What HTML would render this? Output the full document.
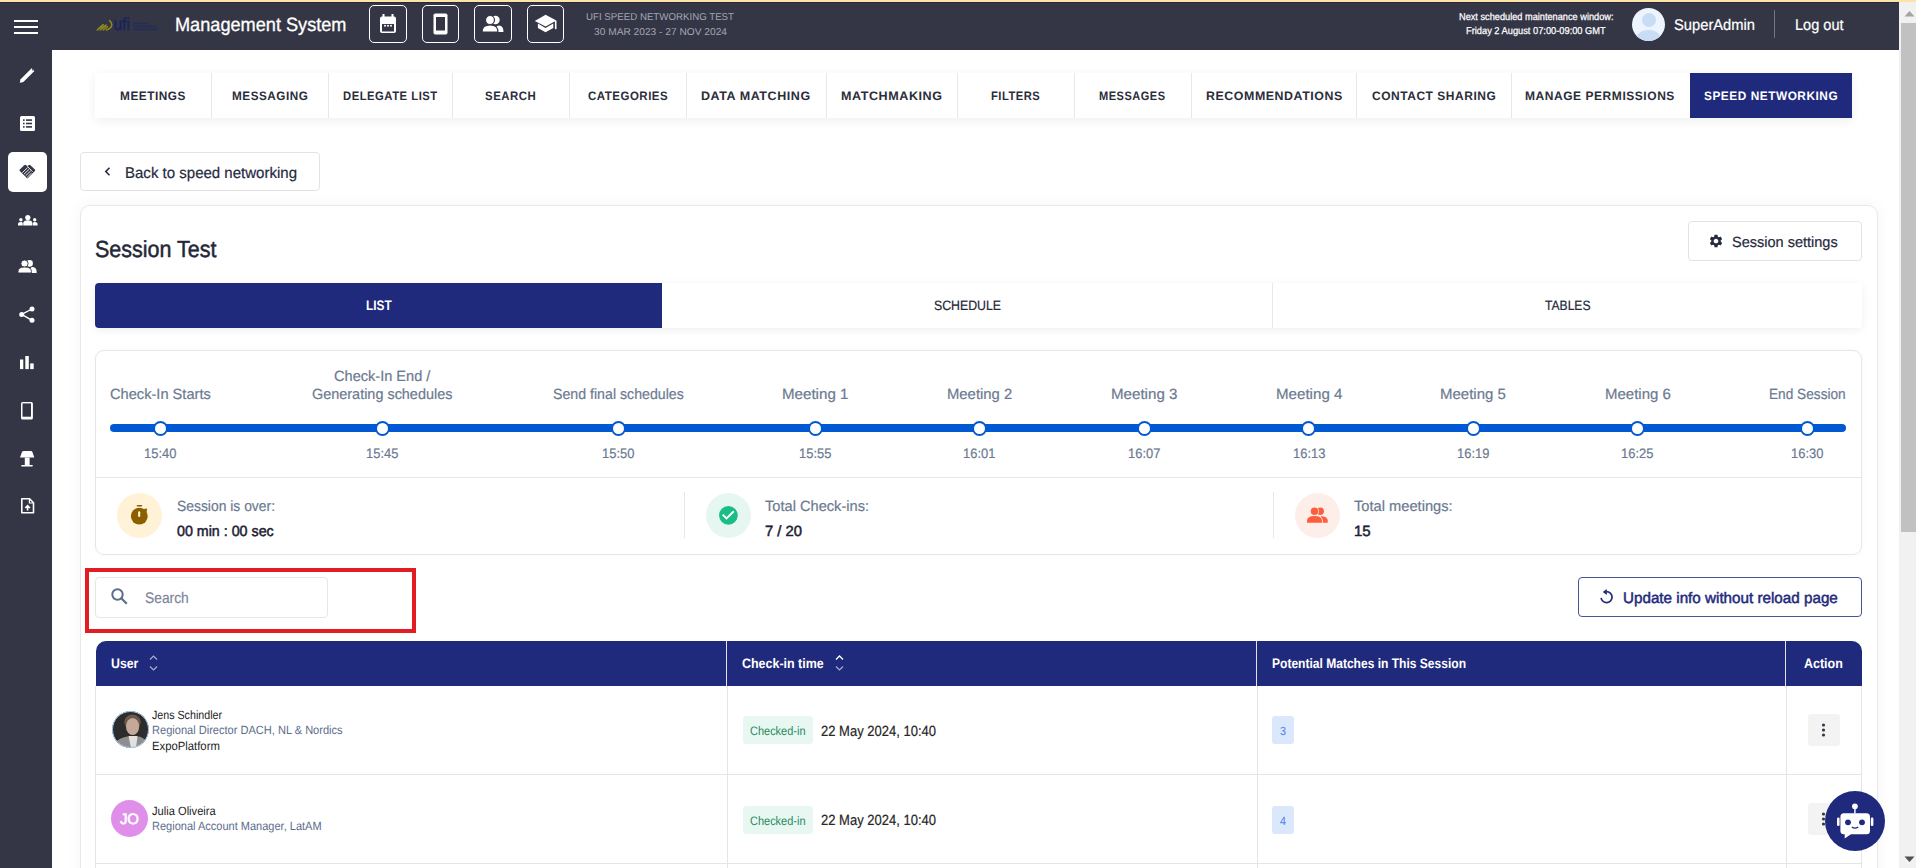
<!DOCTYPE html>
<html><head><meta charset="utf-8">
<style>
*{box-sizing:border-box;margin:0;padding:0}
html,body{width:1916px;height:868px;overflow:hidden;background:#fff;font-family:"Liberation Sans",sans-serif;text-rendering:geometricPrecision}
body{position:relative}
.a{position:absolute}
.t{position:absolute;white-space:nowrap;line-height:1;transform-origin:0 0}
svg{position:absolute;overflow:visible}
.hbox{position:absolute;top:5px;width:38px;height:38px;border:1.6px solid #fff;border-radius:5px}
.div{position:absolute;top:0;width:1px;height:45px;background:#e4e9f0}
.node{position:absolute;top:420.5px;width:15px;height:15px;border-radius:50%;background:#fff;border:2.6px solid #0059d2}
</style></head>
<body>
<!-- frame -->
<div class="a" style="left:0;top:0;width:1916px;height:2px;background:#ffe2a8"></div>
<div class="a" style="left:0;top:2px;width:1899px;height:48px;background:#343646;border-top:1px solid #252a3d"></div>
<div class="a" style="left:0;top:50px;width:52px;height:818px;background:#343646"></div>
<div class="a" style="left:1899px;top:2px;width:17px;height:866px;background:#f1f1f1"></div>
<div class="a" style="left:1901px;top:23px;width:15px;height:509px;background:#c1c1c1"></div>
<svg style="left:1904px;top:10px" width="11" height="7" viewBox="0 0 11 7"><path d="M0.5 6.5 L5.5 1 L10.5 6.5Z" fill="#a3a3a3"/></svg>
<svg style="left:1904px;top:856px" width="11" height="7" viewBox="0 0 11 7"><path d="M0.5 0.5 L5.5 6 L10.5 0.5Z" fill="#505050"/></svg>

<!-- hamburger -->
<div class="a" style="left:14px;top:20px;width:24px;height:2.4px;background:#fff"></div>
<div class="a" style="left:14px;top:26px;width:24px;height:2.4px;background:#fff"></div>
<div class="a" style="left:14px;top:31.6px;width:24px;height:2.4px;background:#fff"></div>

<!-- logo -->
<svg style="left:96px;top:16px" width="64" height="16" viewBox="0 0 64 16">
  <g stroke="#8d8a1c" stroke-width="1.5" fill="none" stroke-linecap="round">
    <path d="M1.2 14 L6.5 9.8"/><path d="M4.2 14 L9.5 9.8"/><path d="M7.2 14 L11.5 10.6"/>
    <path d="M3 12.2 L7.3 8.6"/><path d="M6 12.2 L10 9"/>
    <path d="M10.5 14 Q15.8 12.2 15.8 8.8 Q15.8 6.4 13.6 4.6"/>
  </g>
  <text x="17.4" y="14.1" font-family="Liberation Sans" font-size="17.5" fill="#19245a" stroke="#19245a" stroke-width="0.5" textLength="16.5" lengthAdjust="spacingAndGlyphs">ufi</text>
  <g fill="#1e2a5c" opacity=".75"><rect x="37.3" y="6.6" width="14.6" height="1.6"/><rect x="37.3" y="9.6" width="23.7" height="1.6"/><rect x="37.3" y="12.6" width="24.8" height="1.6"/></g>
</svg>

<!-- header icon boxes -->
<div class="hbox" style="left:369px"></div>
<div class="hbox" style="left:422px;width:37px"></div>
<div class="hbox" style="left:474px"></div>
<div class="hbox" style="left:527px;width:37px"></div>
<!-- calendar -->
<svg style="left:379px;top:14px" width="18" height="20" viewBox="0 0 18 20">
  <rect x="1" y="2.5" width="16" height="16.5" rx="2" fill="#fff"/>
  <rect x="3.5" y="0" width="2" height="4" fill="#fff"/><rect x="12.5" y="0" width="2" height="4" fill="#fff"/>
  <rect x="3" y="10" width="12" height="7.5" fill="#343646"/>
  <circle cx="6" cy="11.8" r="1" fill="#fff"/><circle cx="9" cy="11.8" r="1" fill="#fff"/><circle cx="12" cy="11.8" r="1" fill="#fff"/>
</svg>
<!-- mobile -->
<svg style="left:433px;top:13px" width="15" height="22" viewBox="0 0 15 22">
  <rect x="0.5" y="0.5" width="14" height="21" rx="1.8" fill="#fff"/>
  <rect x="3" y="4" width="9" height="13.5" fill="#343646"/>
</svg>
<!-- users -->
<svg style="left:482px;top:15px" width="22" height="17" viewBox="0 0 22 17">
  <circle cx="13.5" cy="5" r="4.2" fill="#fff"/>
  <path d="M13 17 Q13 10.5 17 10.5 Q21.5 10.5 21.5 17Z" fill="#fff"/>
  <circle cx="8" cy="5" r="4.5" fill="#fff" stroke="#343646" stroke-width="1.2"/>
  <path d="M0 17 Q0 10 8 10 Q16 10 16 17Z" fill="#fff" stroke="#343646" stroke-width="1.2"/>
</svg>
<!-- graduation cap -->
<svg style="left:535px;top:15px" width="22" height="18" viewBox="0 0 22 18">
  <path d="M10.6 -0.3 L21.4 5.6 L10.6 11.6 L-0.2 6Z" fill="#fff"/>
  <path d="M2.9 8.6 L2.9 13 L10.5 17.3 L18.3 13 L18.3 8.6 L10.5 12.9Z" fill="#fff"/>
  <rect x="19.9" y="5.8" width="1.6" height="8.3" fill="#fff"/>
</svg>

<!-- header avatar & divider -->
<div class="a" style="left:1632px;top:7.5px;width:33px;height:33px;border-radius:50%;background:#eef4fd;overflow:hidden">
  <div class="a" style="left:9.5px;top:5.5px;width:14px;height:14px;border-radius:50%;background:#c8dcf6"></div>
  <div class="a" style="left:3px;top:22px;width:27px;height:22px;border-radius:50%;background:#c8dcf6"></div>
</div>
<div class="a" style="left:1774px;top:10px;width:1px;height:28px;background:#737584"></div>

<!-- sidebar icons -->
<div class="a" style="left:8px;top:152px;width:39px;height:40px;background:#fff;border-radius:5px"></div>
<!-- pencil -->
<svg style="left:19px;top:67px" width="17" height="17" viewBox="0 0 17 17">
  <path d="M0.8 15.2 L1.6 12.2 L12.6 1.2 L15.4 4 L4.4 15 L1.2 15.8Z" fill="#fff"/>
  <circle cx="13.6" cy="2.9" r="0.6" fill="#343646"/>
</svg>
<!-- list -->
<svg style="left:20px;top:116px" width="15" height="15" viewBox="0 0 15 15">
  <rect x="0" y="0" width="15" height="15" rx="1.5" fill="#fff"/>
  <g fill="#343646"><rect x="3" y="3.3" width="1.6" height="1.6"/><rect x="3" y="6.7" width="1.6" height="1.6"/><rect x="3" y="10.1" width="1.6" height="1.6"/>
  <rect x="6" y="3.3" width="6" height="1.6"/><rect x="6" y="6.7" width="6" height="1.6"/><rect x="6" y="10.1" width="6" height="1.6"/></g>
</svg>
<!-- handshake -->
<svg style="left:19px;top:164px" width="17" height="15" viewBox="0 0 17 15">
  <path d="M0.8 5.6 L5.2 1.2 Q6.2 0.3 7.2 1.2 L8.3 2.2 L9.4 1.2 Q10.4 0.3 11.4 1.2 L15.9 5.6 Q16.6 6.3 15.9 7 L9 14 Q8.4 14.6 7.8 14 L0.8 7 Q0.1 6.3 0.8 5.6Z" fill="#343646"/>
  <g stroke="#fff" stroke-width="0.9" fill="none">
    <path d="M3.4 8.6 L8.6 3.6"/><path d="M5 10.2 L10.2 5.2"/><path d="M6.6 11.8 L11.6 7"/><path d="M8.2 13.3 L12.6 9"/>
    <path d="M8.4 2.4 L13.5 7.6"/>
  </g>
</svg>
<!-- group of 3 -->
<svg style="left:17.5px;top:214.5px" width="20" height="11" viewBox="0 0 20 11">
  <g fill="#fff"><circle cx="9.8" cy="2.6" r="2.6"/><path d="M5.2 10.5 L5.2 8.5 Q5.2 5.3 9.8 5.3 Q14.4 5.3 14.4 8.5 L14.4 10.5Z"/>
  <circle cx="2.9" cy="4.8" r="1.7"/><path d="M0 10.5 L0 9 Q0 7 2.9 7 Q4.7 7 4.7 8 L4.7 10.5Z"/>
  <circle cx="16.7" cy="4.8" r="1.7"/><path d="M14.9 10.5 L14.9 8 Q14.9 7 16.7 7 Q19.6 7 19.6 9 L19.6 10.5Z"/></g>
</svg>
<!-- users 2 -->
<svg style="left:18px;top:260px" width="19" height="13" viewBox="0 0 19 13">
  <g fill="#fff"><circle cx="11.6" cy="3.4" r="3.3"/><path d="M12 13 Q12 7 14 7 Q18.6 7 18.6 11.5 L18.6 13Z"/></g>
  <circle cx="6.5" cy="3.6" r="3.6" fill="#fff" stroke="#343646" stroke-width="0.9"/>
  <path d="M0 13 L0 11.5 Q0 7 6.7 7 Q13.4 7 13.4 11.5 L13.4 13Z" fill="#fff" stroke="#343646" stroke-width="0.9"/>
</svg>
<!-- share -->
<svg style="left:18.5px;top:306px" width="16" height="17" viewBox="0 0 16 17">
  <g stroke="#fff" stroke-width="1.4"><path d="M2.7 8.4 L13 3"/><path d="M2.7 8.4 L13 14.3"/></g>
  <g fill="#fff"><circle cx="2.7" cy="8.4" r="2.5"/><circle cx="13" cy="3" r="2.5"/><circle cx="13" cy="14.3" r="2.5"/></g>
</svg>
<!-- bar chart -->
<svg style="left:20.4px;top:355.9px" width="14" height="14" viewBox="0 0 14 14">
  <g fill="#fff"><rect x="0" y="3.5" width="3.3" height="9.6"/><rect x="5.3" y="0" width="3.5" height="13.1"/><rect x="10.2" y="7.4" width="3.5" height="5.7"/></g>
</svg>
<!-- mobile -->
<svg style="left:21.2px;top:402px" width="12" height="18" viewBox="0 0 12 18">
  <rect x="0" y="0" width="11.9" height="17.6" rx="1.6" fill="#fff"/>
  <rect x="1.5" y="1.4" width="8.5" height="13.3" fill="#343646"/>
</svg>
<!-- lamp -->
<svg style="left:20.2px;top:451.4px" width="15" height="16" viewBox="0 0 15 16">
  <g fill="#fff"><path d="M3.6 0 L10.8 0 Q12 0 12.4 1 L14.3 6.6 L0 6.6 L2 1 Q2.4 0 3.6 0Z"/><rect x="4.8" y="6.6" width="4.8" height="7.6"/><rect x="1.1" y="13.9" width="11.8" height="1.7" rx="0.8"/></g>
</svg>
<!-- file upload -->
<svg style="left:20.8px;top:497.9px" width="14" height="16" viewBox="0 0 14 16">
  <path d="M0.8 0.8 L8.6 0.8 L12.5 4.7 L12.5 14.8 L0.8 14.8Z" fill="none" stroke="#fff" stroke-width="1.6" stroke-linejoin="round"/>
  <path d="M8.4 0.8 L8.4 5 L12.5 5" fill="none" stroke="#fff" stroke-width="1.2"/>
  <path d="M6.6 12.4 L6.6 8 M4.3 10 L6.6 7.6 L8.9 10" stroke="#fff" stroke-width="1.6" fill="none"/>
</svg>

<!-- nav tabs -->
<div class="a" style="left:95px;top:73px;width:1757px;height:45px;background:#fff;box-shadow:0 3px 10px rgba(30,40,60,.07)">
  <div class="div" style="left:116px"></div>
  <div class="div" style="left:233px"></div>
  <div class="div" style="left:357px"></div>
  <div class="div" style="left:474px"></div>
  <div class="div" style="left:591px"></div>
  <div class="div" style="left:731px"></div>
  <div class="div" style="left:862px"></div>
  <div class="div" style="left:979px"></div>
  <div class="div" style="left:1096px"></div>
  <div class="div" style="left:1261px"></div>
  <div class="div" style="left:1416px"></div>
  <div class="a" style="left:1595px;top:0;width:162px;height:45px;background:#1f2a7c"></div>
</div>

<!-- back button -->
<div class="a" style="left:80px;top:152px;width:240px;height:39px;border:1px solid #e3e3e3;border-radius:4px"></div>
<svg style="left:104px;top:167px" width="7" height="9" viewBox="0 0 7 9"><path d="M5.5 0.8 L1.8 4.5 L5.5 8.2" stroke="#262a3e" stroke-width="1.6" fill="none"/></svg>

<!-- session card -->
<div class="a" style="left:79.5px;top:205px;width:1798.5px;height:700px;border:1px solid #e8e8e8;border-radius:10px;box-shadow:0 0 14px 2px rgba(0,0,0,.035)"></div>
<div class="a" style="left:1688px;top:221px;width:174px;height:40px;border:1px solid #e3e3e3;border-radius:4px"></div>
<svg style="left:1708.5px;top:234px" width="14" height="14" viewBox="0 0 24 24"><path fill="#262a3e" d="M19.14 12.94c.04-.3.06-.61.06-.94 0-.32-.02-.64-.07-.94l2.03-1.58a.49.49 0 0 0 .12-.61l-1.92-3.32a.49.49 0 0 0-.59-.22l-2.39.96c-.5-.38-1.03-.7-1.62-.94l-.36-2.54a.48.48 0 0 0-.48-.41h-3.84c-.24 0-.43.17-.47.41l-.36 2.54c-.59.24-1.13.57-1.62.94l-2.39-.96a.48.48 0 0 0-.59.22L2.74 8.87c-.12.21-.08.47.12.61l2.03 1.58c-.05.3-.09.63-.09.94s.02.64.07.94l-2.03 1.58a.49.49 0 0 0-.12.61l1.92 3.32c.12.22.37.29.59.22l2.39-.96c.5.38 1.03.7 1.62.94l.36 2.54c.05.24.24.41.48.41h3.84c.24 0 .44-.17.47-.41l.36-2.54c.59-.24 1.13-.56 1.62-.94l2.39.96c.22.08.47 0 .59-.22l1.92-3.32c.12-.22.07-.47-.12-.61l-2.01-1.58zM12 15.6c-1.98 0-3.6-1.62-3.6-3.6s1.62-3.6 3.6-3.6 3.6 1.62 3.6 3.6-1.62 3.6-3.6 3.6z" transform="translate(12 12) scale(1.12) translate(-12 -12)"/></svg>

<!-- list/schedule/tables -->
<div class="a" style="left:95px;top:283px;width:1767px;height:45px;background:#fff;box-shadow:0 2px 8px rgba(30,40,60,.07);border-radius:4px"></div>
<div class="a" style="left:95px;top:283px;width:567px;height:45px;background:#1f2a7c;border-radius:4px 0 0 4px"></div>
<div class="a" style="left:1272px;top:283px;width:1px;height:45px;background:#e6e8ee"></div>

<!-- timeline card -->
<div class="a" style="left:95px;top:350px;width:1767px;height:205px;border:1px solid #e6e6e6;border-radius:9px;box-shadow:0 0 6px rgba(0,0,0,.03)"></div>
<div class="a" style="left:96px;top:477px;width:1765px;height:1px;background:#e6e6e6"></div>
<div class="a" style="left:110px;top:424px;width:1736px;height:8px;background:#0059d2;border-radius:4px"></div>
<div class="node" style="left:153.0px"></div>
<div class="node" style="left:374.8px"></div>
<div class="node" style="left:611.0px"></div>
<div class="node" style="left:807.8px"></div>
<div class="node" style="left:971.9px"></div>
<div class="node" style="left:1136.6px"></div>
<div class="node" style="left:1301.3px"></div>
<div class="node" style="left:1465.7px"></div>
<div class="node" style="left:1629.8px"></div>
<div class="node" style="left:1799.9px"></div>

<!-- summary -->
<div class="a" style="left:117px;top:493px;width:45px;height:45px;border-radius:50%;background:#fff2d7"></div>
<svg style="left:130px;top:504px" width="19" height="22" viewBox="0 0 19 22">
  <rect x="6.8" y="1.1" width="5.3" height="1.5" rx=".5" fill="#8b5f00"/>
  <circle cx="9.3" cy="12.2" r="8.4" fill="#8b5f00"/>
  <path d="M13.5 5 L17.2 4.6 L16.6 8.2Z" fill="#8b5f00"/>
  <rect x="8.1" y="7.3" width="2.1" height="5.6" rx="1" fill="#fff2d7"/>
</svg>
<div class="a" style="left:684px;top:492px;width:1px;height:46px;background:#e6e6e6"></div>
<div class="a" style="left:706px;top:493px;width:45px;height:45px;border-radius:50%;background:#e6f7f1"></div>
<svg style="left:719px;top:506px" width="19" height="19" viewBox="0 0 19 19">
  <circle cx="9.4" cy="9.3" r="9.35" fill="#19bd85"/>
  <path d="M3.7 8.6 L7.5 12.5 L14.8 5.3" stroke="#fff" stroke-width="1.9" fill="none"/>
</svg>
<div class="a" style="left:1273px;top:492px;width:1px;height:46px;background:#e6e6e6"></div>
<div class="a" style="left:1295px;top:493px;width:45px;height:45px;border-radius:50%;background:#fdeeea"></div>
<svg style="left:1306px;top:506px" width="23" height="18" viewBox="0 0 23 18">
  <g fill="#fe5e3b"><circle cx="14.3" cy="5.3" r="3.7"/><path d="M16.2 10.2 Q21.7 10.8 21.7 14.8 L21.7 16.8 L15 16.8 L15 10.2Z"/></g>
  <g fill="#fdeeea"><circle cx="8.5" cy="5.3" r="4.5"/><path d="M0.2 17.6 L0.2 14.8 Q0.2 9.2 8.5 9.2 Q16.8 9.2 16.8 14.8 L16.8 17.6Z"/></g>
  <g fill="#fe5e3b"><circle cx="8.5" cy="5.3" r="3.75"/><path d="M1 16.8 L1 14.8 Q1 10 8.5 10 Q16 10 16 14.8 L16 16.8Z"/></g>
</svg>

<!-- search -->
<div class="a" style="left:84.5px;top:568px;width:331px;height:64.5px;border:4px solid #e31b23"></div>
<div class="a" style="left:95px;top:576.5px;width:232.5px;height:41px;border:1px solid #e6e6e6;border-radius:4px"></div>
<svg style="left:111px;top:588px" width="17" height="17" viewBox="0 0 17 17">
  <circle cx="6.5" cy="6.5" r="5.2" stroke="#5d6e8c" stroke-width="2" fill="none"/>
  <path d="M10.3 10.3 L15.8 15.8" stroke="#5d6e8c" stroke-width="2.2"/>
</svg>

<!-- update button -->
<div class="a" style="left:1578px;top:577px;width:284px;height:39.5px;border:1px solid #4b5493;border-radius:4px"></div>
<svg style="left:1599px;top:588px" width="15" height="16" viewBox="0 0 15 16">
  <path d="M7.5 3.6 A5.5 5.5 0 1 1 2.1 9.8" stroke="#1f2a7c" stroke-width="1.7" fill="none"/>
  <path d="M3.8 3.9 L7.8 0.9 L7.8 6.9Z" fill="#1f2a7c"/>
</svg>

<!-- table -->
<div class="a" style="left:95.5px;top:641px;width:1766px;height:45px;background:#1f2a7c;border-radius:10px 10px 0 0"></div>
<div class="a" style="left:726px;top:641px;width:1px;height:45px;background:#e0e2ea"></div>
<div class="a" style="left:1256px;top:641px;width:1px;height:45px;background:#e0e2ea"></div>
<div class="a" style="left:1785px;top:641px;width:1px;height:45px;background:#e0e2ea"></div>
<div class="a" style="left:95px;top:686px;width:1px;height:200px;background:#e5e5e5"></div>
<div class="a" style="left:726.5px;top:686px;width:1px;height:200px;background:#e5e5e5"></div>
<div class="a" style="left:1256.5px;top:686px;width:1px;height:200px;background:#e5e5e5"></div>
<div class="a" style="left:1785.5px;top:686px;width:1px;height:200px;background:#e5e5e5"></div>
<div class="a" style="left:1861px;top:686px;width:1px;height:200px;background:#e5e5e5"></div>
<div class="a" style="left:95px;top:774px;width:1767px;height:1px;background:#e5e5e5"></div>
<div class="a" style="left:95px;top:863px;width:1767px;height:1px;background:#e5e5e5"></div>
<!-- sort icons -->
<svg style="left:148.9px;top:655px" width="9" height="16" viewBox="0 0 9 16"><path d="M1 4.5 L4.5 1 L8 4.5 M1 11.5 L4.5 15 L8 11.5" stroke="#a9aed0" stroke-width="1.2" fill="none"/></svg>
<svg style="left:834.5px;top:655px" width="9" height="16" viewBox="0 0 9 16"><path d="M1 4.5 L4.5 1 L8 4.5" stroke="#fff" stroke-width="1.3" fill="none"/><path d="M1 11.5 L4.5 15 L8 11.5" stroke="#a9aed0" stroke-width="1.2" fill="none"/></svg>

<!-- row avatars -->
<svg style="left:111.5px;top:711.3px" width="37" height="37" viewBox="0 0 37 37">
  <defs><clipPath id="cp"><circle cx="18.5" cy="18.5" r="18.3"/></clipPath></defs>
  <g clip-path="url(#cp)">
    <rect width="37" height="37" fill="#2c2c2c"/>
    <ellipse cx="20.5" cy="11" rx="8.2" ry="7.5" fill="#6b5a4c"/>
    <ellipse cx="20.6" cy="15.5" rx="6.6" ry="8.6" fill="#c6a898"/>
    <path d="M2 37 L4 31 Q7 27 15 25.5 L27 25.5 Q33 27 36 32 L37 37Z" fill="#8e8e90"/>
    <path d="M16.5 25 L25.5 25 L24 37 L19 37Z" fill="#e4e0de"/>
  </g>
  <circle cx="18.5" cy="18.5" r="18" fill="none" stroke="#a8c7ec" stroke-width="1"/>
</svg>
<div class="a" style="left:111px;top:800px;width:37px;height:37px;border-radius:50%;background:#df8fea"></div>
<div class="t" style="left:120px;top:812px;font-size:15px;font-weight:normal;-webkit-text-stroke:0.6px #fff;color:#fff;line-height:1;letter-spacing:-.3px">JO</div>

<!-- badges -->
<div class="a" style="left:743px;top:716px;width:70px;height:27.5px;background:#e8f7f1;border-radius:3px"></div>
<div class="a" style="left:743px;top:806px;width:70px;height:27.5px;background:#e8f7f1;border-radius:3px"></div>
<div class="a" style="left:1272px;top:716px;width:22px;height:28px;background:#dbe8fc;border-radius:3px"></div>
<div class="a" style="left:1272px;top:806px;width:22px;height:28px;background:#dbe8fc;border-radius:3px"></div>
<!-- kebab -->
<div class="a" style="left:1808px;top:714px;width:32px;height:32px;background:#f3f3f3;border-radius:3px"></div>
<svg style="left:1820.6px;top:723px" width="5" height="14" viewBox="0 0 5 14"><g fill="#333845"><circle cx="2.5" cy="2" r="1.6"/><circle cx="2.5" cy="7" r="1.6"/><circle cx="2.5" cy="12" r="1.6"/></g></svg>
<div class="a" style="left:1808px;top:803px;width:32px;height:32px;background:#f3f3f3;border-radius:3px"></div>
<svg style="left:1820.6px;top:812px" width="5" height="14" viewBox="0 0 5 14"><g fill="#333845"><circle cx="2.5" cy="2" r="1.6"/><circle cx="2.5" cy="7" r="1.6"/><circle cx="2.5" cy="12" r="1.6"/></g></svg>

<!-- chatbot -->
<div class="a" style="left:1825px;top:791px;width:60px;height:60px;border-radius:50%;background:#1f2a7c"></div>
<svg style="left:1835px;top:801px" width="40" height="40" viewBox="0 0 40 40">
  <circle cx="19.9" cy="5.3" r="2.9" fill="#fff"/>
  <rect x="19.2" y="6" width="1.4" height="6.5" fill="#fff"/>
  <rect x="5.4" y="12.2" width="29.6" height="21" rx="3.5" fill="#fff"/>
  <path d="M9.7 32 L9.7 37.6 L17.7 32Z" fill="#fff"/>
  <rect x="2" y="16.5" width="2.6" height="8.5" rx="1.2" fill="#fff"/>
  <rect x="35.8" y="16.5" width="2.6" height="8.5" rx="1.2" fill="#fff"/>
  <circle cx="13" cy="21.3" r="2.9" fill="#1f2a7c"/><circle cx="27" cy="21.3" r="2.9" fill="#1f2a7c"/>
  <path d="M16.8 26 Q20 28.2 23.2 26" stroke="#1f2a7c" stroke-width="1.4" fill="none"/>
</svg>

<div class="t" id="t0" style="left:175.30px;top:16px;font-size:19.20px;font-weight:normal;color:#fff;transform:scaleX(0.9459);-webkit-text-stroke:0.3px currentColor">Management System</div>
<div class="t" id="t1" style="left:586.00px;top:13px;font-size:10.00px;font-weight:normal;color:#a3a6b4;transform:scaleX(0.9698);">UFI SPEED NETWORKING TEST</div>
<div class="t" id="t2" style="left:593.50px;top:28px;font-size:10.00px;font-weight:normal;color:#a3a6b4;transform:scaleX(1.0181);">30 MAR 2023 - 27 NOV 2024</div>
<div class="t" id="t3" style="left:1458.70px;top:13px;font-size:10.00px;font-weight:normal;color:#fff;transform:scaleX(0.9202);-webkit-text-stroke:0.25px currentColor">Next scheduled maintenance window:</div>
<div class="t" id="t4" style="left:1466.00px;top:27px;font-size:10.00px;font-weight:normal;color:#fff;transform:scaleX(0.9274);-webkit-text-stroke:0.25px currentColor">Friday 2 August 07:00-09:00 GMT</div>
<div class="t" id="t5" style="left:1674.00px;top:18px;font-size:15.50px;font-weight:normal;color:#fff;transform:scaleX(0.9496);-webkit-text-stroke:0.20px currentColor;">SuperAdmin</div>
<div class="t" id="t6" style="left:1794.60px;top:18px;font-size:15.50px;font-weight:normal;color:#fff;transform:scaleX(0.9378);-webkit-text-stroke:0.20px currentColor;">Log out</div>
<div class="t" id="t7" style="left:119.70px;top:90px;font-size:12.20px;font-weight:bold;color:#2b2e3b;transform:scaleX(0.9697);letter-spacing:0.55px">MEETINGS</div>
<div class="t" id="t8" style="left:231.50px;top:90px;font-size:12.20px;font-weight:bold;color:#2b2e3b;transform:scaleX(0.9616);letter-spacing:0.55px">MESSAGING</div>
<div class="t" id="t9" style="left:343.20px;top:90px;font-size:12.20px;font-weight:bold;color:#2b2e3b;transform:scaleX(0.9247);letter-spacing:0.55px">DELEGATE LIST</div>
<div class="t" id="t10" style="left:485.20px;top:90px;font-size:12.20px;font-weight:bold;color:#2b2e3b;transform:scaleX(0.9367);letter-spacing:0.55px">SEARCH</div>
<div class="t" id="t11" style="left:587.80px;top:90px;font-size:12.20px;font-weight:bold;color:#2b2e3b;transform:scaleX(0.9415);letter-spacing:0.55px">CATEGORIES</div>
<div class="t" id="t12" style="left:701.30px;top:90px;font-size:12.20px;font-weight:bold;color:#2b2e3b;transform:scaleX(1.0263);letter-spacing:0.55px">DATA MATCHING</div>
<div class="t" id="t13" style="left:841.00px;top:90px;font-size:12.20px;font-weight:bold;color:#2b2e3b;transform:scaleX(1.0307);letter-spacing:0.55px">MATCHMAKING</div>
<div class="t" id="t14" style="left:991.30px;top:90px;font-size:12.20px;font-weight:bold;color:#2b2e3b;transform:scaleX(0.9175);letter-spacing:0.55px">FILTERS</div>
<div class="t" id="t15" style="left:1099.40px;top:90px;font-size:12.20px;font-weight:bold;color:#2b2e3b;transform:scaleX(0.9063);letter-spacing:0.55px">MESSAGES</div>
<div class="t" id="t16" style="left:1205.70px;top:90px;font-size:12.20px;font-weight:bold;color:#2b2e3b;transform:scaleX(1.0160);letter-spacing:0.55px">RECOMMENDATIONS</div>
<div class="t" id="t17" style="left:1372.00px;top:90px;font-size:12.20px;font-weight:bold;color:#2b2e3b;transform:scaleX(0.9825);letter-spacing:0.55px">CONTACT SHARING</div>
<div class="t" id="t18" style="left:1525.40px;top:90px;font-size:12.20px;font-weight:bold;color:#2b2e3b;transform:scaleX(0.9855);letter-spacing:0.55px">MANAGE PERMISSIONS</div>
<div class="t" id="t19" style="left:1703.90px;top:90px;font-size:12.20px;font-weight:bold;color:#fff;transform:scaleX(0.9715);letter-spacing:0.55px">SPEED NETWORKING</div>
<div class="t" id="t20" style="left:124.50px;top:166px;font-size:15.50px;font-weight:normal;color:#262a3e;transform:scaleX(0.9690);-webkit-text-stroke:0.20px currentColor;">Back to speed networking</div>
<div class="t" id="t21" style="left:94.50px;top:238px;font-size:23.30px;font-weight:normal;color:#232838;transform:scaleX(0.9227);-webkit-text-stroke:0.5px currentColor">Session Test</div>
<div class="t" id="t22" style="left:1732.00px;top:236px;font-size:14.80px;font-weight:normal;color:#262a3e;transform:scaleX(0.9810);-webkit-text-stroke:0.20px currentColor;">Session settings</div>
<div class="t" id="t23" style="left:365.90px;top:299px;font-size:13.80px;font-weight:bold;color:#fff;transform:scaleX(0.8594);">LIST</div>
<div class="t" id="t24" style="left:934.00px;top:299px;font-size:13.60px;font-weight:normal;color:#232838;transform:scaleX(0.9050);-webkit-text-stroke:0.20px currentColor;">SCHEDULE</div>
<div class="t" id="t25" style="left:1545.00px;top:299px;font-size:13.60px;font-weight:normal;color:#232838;transform:scaleX(0.8900);-webkit-text-stroke:0.20px currentColor;">TABLES</div>
<div class="t" id="t26" style="left:110.00px;top:388px;font-size:14.80px;font-weight:normal;color:#6c7a91;transform:scaleX(0.9885);-webkit-text-stroke:0.20px currentColor;">Check-In Starts</div>
<div class="t" id="t27" style="left:334.20px;top:370px;font-size:14.80px;font-weight:normal;color:#6c7a91;transform:scaleX(0.9849);-webkit-text-stroke:0.20px currentColor;">Check-In End /</div>
<div class="t" id="t28" style="left:311.90px;top:388px;font-size:14.80px;font-weight:normal;color:#6c7a91;transform:scaleX(0.9753);-webkit-text-stroke:0.20px currentColor;">Generating schedules</div>
<div class="t" id="t29" style="left:553.20px;top:388px;font-size:14.80px;font-weight:normal;color:#6c7a91;transform:scaleX(0.9578);-webkit-text-stroke:0.20px currentColor;">Send final schedules</div>
<div class="t" id="t30" style="left:782.40px;top:388px;font-size:14.80px;font-weight:normal;color:#6c7a91;transform:scaleX(1.0218);-webkit-text-stroke:0.20px currentColor;">Meeting 1</div>
<div class="t" id="t31" style="left:947.40px;top:388px;font-size:14.80px;font-weight:normal;color:#6c7a91;transform:scaleX(1.0033);-webkit-text-stroke:0.20px currentColor;">Meeting 2</div>
<div class="t" id="t32" style="left:1111.20px;top:388px;font-size:14.80px;font-weight:normal;color:#6c7a91;transform:scaleX(1.0218);-webkit-text-stroke:0.20px currentColor;">Meeting 3</div>
<div class="t" id="t33" style="left:1275.80px;top:388px;font-size:14.80px;font-weight:normal;color:#6c7a91;transform:scaleX(1.0218);-webkit-text-stroke:0.20px currentColor;">Meeting 4</div>
<div class="t" id="t34" style="left:1440.30px;top:388px;font-size:14.80px;font-weight:normal;color:#6c7a91;transform:scaleX(1.0126);-webkit-text-stroke:0.20px currentColor;">Meeting 5</div>
<div class="t" id="t35" style="left:1604.70px;top:388px;font-size:14.80px;font-weight:normal;color:#6c7a91;transform:scaleX(1.0126);-webkit-text-stroke:0.20px currentColor;">Meeting 6</div>
<div class="t" id="t36" style="left:1769.20px;top:388px;font-size:14.80px;font-weight:normal;color:#6c7a91;transform:scaleX(0.9231);-webkit-text-stroke:0.20px currentColor;">End Session</div>
<div class="t" id="t37" style="left:144.30px;top:447px;font-size:13.70px;font-weight:normal;color:#6c7a91;transform:scaleX(0.9456);-webkit-text-stroke:0.20px currentColor;">15:40</div>
<div class="t" id="t38" style="left:366.10px;top:447px;font-size:13.70px;font-weight:normal;color:#6c7a91;transform:scaleX(0.9456);-webkit-text-stroke:0.20px currentColor;">15:45</div>
<div class="t" id="t39" style="left:602.30px;top:447px;font-size:13.70px;font-weight:normal;color:#6c7a91;transform:scaleX(0.9456);-webkit-text-stroke:0.20px currentColor;">15:50</div>
<div class="t" id="t40" style="left:799.10px;top:447px;font-size:13.70px;font-weight:normal;color:#6c7a91;transform:scaleX(0.9456);-webkit-text-stroke:0.20px currentColor;">15:55</div>
<div class="t" id="t41" style="left:963.20px;top:447px;font-size:13.70px;font-weight:normal;color:#6c7a91;transform:scaleX(0.9456);-webkit-text-stroke:0.20px currentColor;">16:01</div>
<div class="t" id="t42" style="left:1127.90px;top:447px;font-size:13.70px;font-weight:normal;color:#6c7a91;transform:scaleX(0.9456);-webkit-text-stroke:0.20px currentColor;">16:07</div>
<div class="t" id="t43" style="left:1292.60px;top:447px;font-size:13.70px;font-weight:normal;color:#6c7a91;transform:scaleX(0.9456);-webkit-text-stroke:0.20px currentColor;">16:13</div>
<div class="t" id="t44" style="left:1457.00px;top:447px;font-size:13.70px;font-weight:normal;color:#6c7a91;transform:scaleX(0.9456);-webkit-text-stroke:0.20px currentColor;">16:19</div>
<div class="t" id="t45" style="left:1621.10px;top:447px;font-size:13.70px;font-weight:normal;color:#6c7a91;transform:scaleX(0.9456);-webkit-text-stroke:0.20px currentColor;">16:25</div>
<div class="t" id="t46" style="left:1791.20px;top:447px;font-size:13.70px;font-weight:normal;color:#6c7a91;transform:scaleX(0.9456);-webkit-text-stroke:0.20px currentColor;">16:30</div>
<div class="t" id="t47" style="left:176.50px;top:500px;font-size:14.80px;font-weight:normal;color:#6c7a91;transform:scaleX(0.9382);-webkit-text-stroke:0.20px currentColor;">Session is over:</div>
<div class="t" id="t48" style="left:176.50px;top:525px;font-size:14.80px;font-weight:normal;color:#1d2134;transform:scaleX(0.9637);-webkit-text-stroke:0.5px currentColor">00 min : 00 sec</div>
<div class="t" id="t49" style="left:765.00px;top:500px;font-size:14.80px;font-weight:normal;color:#6c7a91;transform:scaleX(0.9880);-webkit-text-stroke:0.20px currentColor;">Total Check-ins:</div>
<div class="t" id="t50" style="left:765.00px;top:525px;font-size:14.80px;font-weight:normal;color:#1d2134;transform:scaleX(0.9992);-webkit-text-stroke:0.5px currentColor">7 / 20</div>
<div class="t" id="t51" style="left:1354.30px;top:500px;font-size:14.80px;font-weight:normal;color:#6c7a91;transform:scaleX(0.9916);-webkit-text-stroke:0.20px currentColor;">Total meetings:</div>
<div class="t" id="t52" style="left:1354.30px;top:525px;font-size:14.80px;font-weight:normal;color:#1d2134;transform:scaleX(1.0140);-webkit-text-stroke:0.5px currentColor">15</div>
<div class="t" id="t53" style="left:144.70px;top:591px;font-size:15.30px;font-weight:normal;color:#7c8699;transform:scaleX(0.9037);-webkit-text-stroke:0.20px currentColor;">Search</div>
<div class="t" id="t54" style="left:1622.60px;top:591px;font-size:15.30px;font-weight:normal;color:#1f2a7c;transform:scaleX(0.9944);-webkit-text-stroke:0.5px currentColor">Update info without reload page</div>
<div class="t" id="t55" style="left:111.00px;top:657px;font-size:13.70px;font-weight:bold;color:#fff;transform:scaleX(0.9002);">User</div>
<div class="t" id="t56" style="left:742.30px;top:657px;font-size:13.70px;font-weight:bold;color:#fff;transform:scaleX(0.9101);">Check-in time</div>
<div class="t" id="t57" style="left:1271.50px;top:657px;font-size:13.70px;font-weight:bold;color:#fff;transform:scaleX(0.8795);">Potential Matches in This Session</div>
<div class="t" id="t58" style="left:1804.20px;top:657px;font-size:13.70px;font-weight:bold;color:#fff;transform:scaleX(0.9109);">Action</div>
<div class="t" id="t59" style="left:152.20px;top:709px;font-size:12.00px;font-weight:normal;color:#1d1d1d;transform:scaleX(0.8892);">Jens Schindler</div>
<div class="t" id="t60" style="left:152.20px;top:724px;font-size:12.00px;font-weight:normal;color:#5d6d8d;transform:scaleX(0.9210);">Regional Director DACH, NL &amp; Nordics</div>
<div class="t" id="t61" style="left:152.20px;top:740px;font-size:12.00px;font-weight:normal;color:#1d1d1d;transform:scaleX(0.9413);">ExpoPlatform</div>
<div class="t" id="t62" style="left:152.20px;top:805px;font-size:12.00px;font-weight:normal;color:#1d1d1d;transform:scaleX(0.9272);">Julia Oliveira</div>
<div class="t" id="t63" style="left:152.20px;top:820px;font-size:12.00px;font-weight:normal;color:#5d6d8d;transform:scaleX(0.9178);">Regional Account Manager, LatAM</div>
<div class="t" id="t64" style="left:750.00px;top:725px;font-size:12.30px;font-weight:normal;color:#1f8b5f;transform:scaleX(0.8922);">Checked-in</div>
<div class="t" id="t65" style="left:821.00px;top:725px;font-size:14.80px;font-weight:normal;color:#262626;transform:scaleX(0.8791);-webkit-text-stroke:0.20px currentColor;">22 May 2024, 10:40</div>
<div class="t" id="t66" style="left:750.00px;top:815px;font-size:12.30px;font-weight:normal;color:#1f8b5f;transform:scaleX(0.8922);">Checked-in</div>
<div class="t" id="t67" style="left:821.00px;top:814px;font-size:14.80px;font-weight:normal;color:#262626;transform:scaleX(0.8791);-webkit-text-stroke:0.20px currentColor;">22 May 2024, 10:40</div>
<div class="t" id="t68" style="left:1280.00px;top:725px;font-size:12.00px;font-weight:normal;color:#4a86ea;transform:scaleX(0.8972);">3</div>
<div class="t" id="t69" style="left:1280.00px;top:815px;font-size:12.00px;font-weight:normal;color:#4a86ea;transform:scaleX(0.8972);">4</div>
</body></html>
